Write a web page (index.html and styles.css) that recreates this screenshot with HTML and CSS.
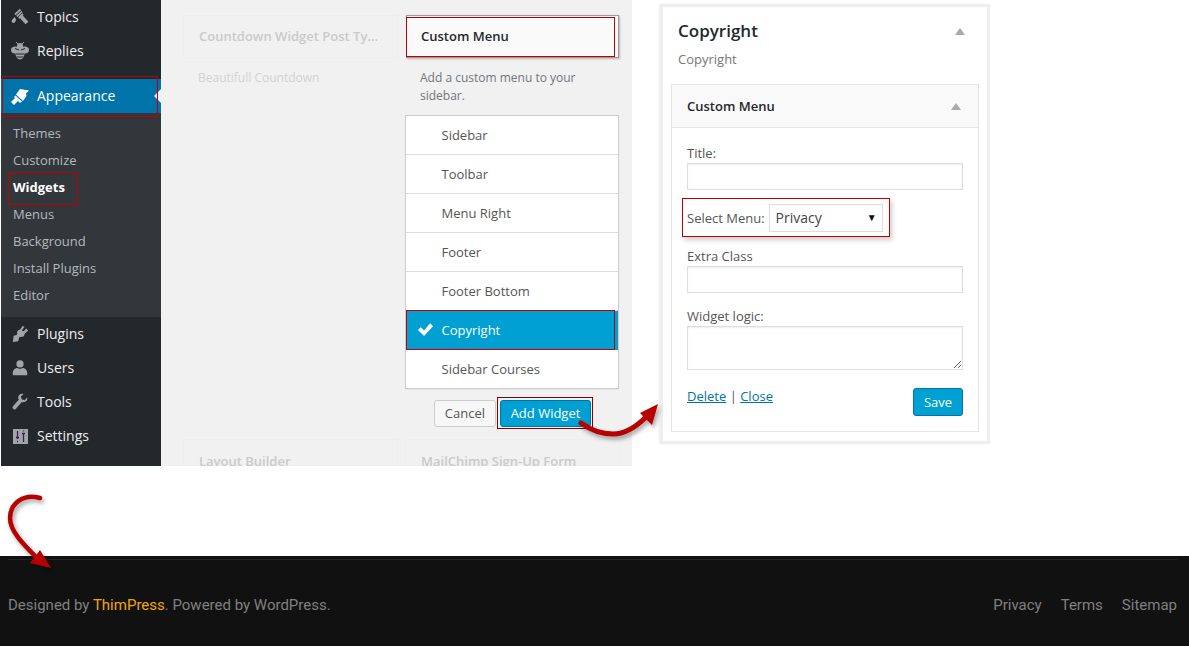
FILE: index.html
```html
<!DOCTYPE html>
<html lang="en">
<head>
<meta charset="utf-8">
<title>Custom Menu widget</title>
<link rel="stylesheet" href="styles.css">
</head>
<body>
<div class="shot">
  <nav class="side">
    <a class="mi"><svg class="ic" viewBox="0 0 18 18"><g class="ln"><path d="M4 6.500L9.500 1.500M5.800 8.300L11 3.700M7.700 10L12 6"/><path class="th" d="M10 8.500L16 15"/></g><path d="M3.500 9L5 11c0 2-1 4-2.500 4S0 13.500 1 12z"/></svg>Topics</a>
    <a class="mi"><svg class="ic" viewBox="0 0 18 18"><ellipse cx="4.500" cy="8" rx="4.500" ry="3.500"/><ellipse cx="13.500" cy="8" rx="4.500" ry="3.500"/><ellipse cx="9" cy="11.500" rx="4.500" ry="6"/><circle cx="9" cy="4" r="3"/><path class="gap" d="M4 6.500L8 8M14 6.500L10 8M5 12h8M5.500 15h7"/><path class="ant" d="M7 2L5 0M11 2l2-2"/></svg>Replies</a>
    <a class="mi cur"><svg class="ic" viewBox="0 0 18 18"><path d="M9 2L18 3.500L15 6.500L15.500 9L12 14L5 7.500z"/><path d="M4.500 8.500L11 14.500L9 16L7 14L3 18L0 15L4 11L3 10z"/></svg>Appearance<i class="notch"></i></a>
    <div class="sub">
      <a>Themes</a><a>Customize</a><a class="on">Widgets</a><a>Menus</a><a>Background</a><a>Install Plugins</a><a>Editor</a>
    </div>
    <a class="mi"><svg class="ic" viewBox="0 0 20 20"><path d="M13 1l2 1-3 4 2 1 3-3 2 2-4 4c0 3-3 4-5 3l-1 1-1 4-6 1 1-7 3-1 1-1c-1-2 0-4 3-5z"/></svg>Plugins</a>
    <a class="mi"><svg class="ic" viewBox="0 0 20 20"><circle cx="10" cy="5.500" r="4"/><path d="M2 18v-3c0-3 3-5 5-5 1 1 5 1 6 0 2 0 5 2 5 5v3z"/></svg>Users</a>
    <a class="mi"><svg class="ic" viewBox="0 0 20 20"><path d="M18 5l-3 3-3-1-1-3 3-3c-3-1-6 1-6 4 0 1 0 2 1 2l-7 8c-1 2 1 4 3 3l7-8c4 1 7-2 6-5z"/></svg>Tools</a>
    <a class="mi"><svg class="ic" viewBox="0 0 18 18"><rect x="2" y="2" width="15" height="15"/><path class="slid" d="M6.500 4v8M5 10.500h3M6 14.500h1M12.500 7v8M11 6.500h3M12.500 3.500v1"/></svg>Settings</a>
  </nav>
  <main class="avail">
    <div class="cols">
      <div class="col">
        <div class="ghost-title">Countdown Widget Post Ty...</div>
        <p class="ghost-desc">Beautifull Countdown</p>
      </div>
      <div class="col">
        <div class="wtitle">Custom Menu</div>
        <p class="desc">Add a custom menu to your sidebar.</p>
        <ul class="areas">
          <li>Sidebar</li><li>Toolbar</li><li>Menu Right</li><li>Footer</li><li>Footer Bottom</li>
          <li class="sel"><svg class="chk" viewBox="0 0 18 15"><path d="M1 8l3-3 3.500 3.500L14 1l3 3-9.500 10.500z"/></svg>Copyright</li>
          <li>Sidebar Courses</li>
        </ul>
        <div class="acts"><button class="btn">Cancel</button><button class="btn pri">Add Widget</button></div>
      </div>
    </div>
    <div class="cols lower">
      <div class="col"><div class="ghost-title">Layout Builder</div></div>
      <div class="col"><div class="ghost-title">MailChimp Sign-Up Form</div></div>
    </div>
  </main>
  <section class="panel">
    <header class="phead"><h2>Copyright</h2><i class="tri"></i></header>
    <p class="psub">Copyright</p>
    <div class="card">
      <div class="chead"><h3>Custom Menu</h3><i class="tri"></i></div>
      <form class="cbody">
        <label class="lab">Title:</label>
        <div class="inp"></div>
        <div class="selrow"><label>Select Menu:</label><div class="fsel"><span>Privacy</span><b>▼</b></div></div>
        <label class="lab">Extra Class</label>
        <div class="inp"></div>
        <label class="lab logic">Widget logic:</label>
        <div class="inp area"><svg class="grip" viewBox="0 0 9 9"><path d="M1 8l7-7M5 8l3-3" stroke="#666" fill="none"/></svg></div>
        <div class="foot"><span class="links"><a>Delete</a> | <a>Close</a></span><button class="btn pri save" type="button">Save</button></div>
      </form>
    </div>
  </section>

  <i class="mark m1"></i><i class="mark m2"></i><i class="mark m3"></i><i class="mark m4"></i><i class="mark m5"></i><i class="mark m6"></i>
  <svg class="arrow a1" viewBox="0 0 100 50"><path d="M11 28C22 36 33 39 43 39C56 39 66 32 76 22" fill="none" stroke="#b80000" stroke-width="5" stroke-linecap="round"/><path d="M88 9L70 18L82 30z" fill="#b80000"/></svg>
  <svg class="arrow a2" viewBox="0 0 60 90"><path d="M39 8C22 3 9 14 9 28C9 42 24 56 38 70" fill="none" stroke="#b80000" stroke-width="4.500" stroke-linecap="round"/><path d="M50 78L29 73L39 60z" fill="#b80000"/></svg>
</div>
<footer class="foot-bar">
  <div class="foot-in">
    <span>Designed by <a class="brand">ThimPress</a>. Powered by WordPress.</span>
    <nav class="foot-nav"><a>Privacy</a><a>Terms</a><a>Sitemap</a></nav>
  </div>
</footer>
</body>
</html>
```
FILE: styles.css
```css
*{box-sizing:border-box}
html,body{margin:0;padding:0;background:#fff}
body{width:1189px;height:649px;overflow:hidden;font-family:"Open Sans",sans-serif;font-size:13px;color:#444}
.shot{position:relative;display:flex;height:556px;padding-left:1px;align-items:flex-start}
.side{width:160px;height:466px;background:#23282d;color:#eee;font-size:14px;flex:none}
.mi{display:flex;align-items:center;height:34px;padding:0 0 2px 10px;position:relative}
.ic{width:18px;height:18px;fill:#a0a5aa;margin:0 8px -2px 0;flex:none}
.ln path{fill:none;stroke:#a0a5aa;stroke-width:1.800}
.ln .th{stroke-width:4}
.gap{fill:none;stroke:#23282d;stroke-width:1}
.ant{fill:none;stroke:#a0a5aa;stroke-width:1}
.slid{fill:none;stroke:#3d2350;stroke-width:1.300}
.mi:nth-child(3){margin-top:11px}
.cur{background:#0073aa;color:#fff}
.cur .ic{fill:#fff}
.notch{position:absolute;right:0;top:10px;border:7px solid transparent;border-left:0;border-right:7px solid #f1f1f1}
.sub{background:#32373c;padding:7px 0 0;height:204px;color:#b4b9be;font-size:13px}
.sub a{display:block;height:27px;line-height:27px;padding-left:12px}
.sub .on{color:#fff;font-weight:700}
.avail{width:471px;height:466px;background:#f1f1f1;flex:none;overflow:hidden;padding:15px 14px 0 22px}
.cols{display:flex;gap:8px}
.col{width:215px;flex:none}
.ghost-title{height:43px;line-height:41px;padding-left:15px;border:1px solid #eee;background:#f1f1f1;color:#cacaca;font-weight:600;font-size:13px}
.ghost-desc{margin:11px 0 0;padding-left:15px;color:#d2d2d2;line-height:18px;font-size:12px}
.wtitle{height:43px;line-height:40px;padding-left:14px;width:213px;background:#fafafa;border:1px solid #999;color:#23282d;font-weight:600;box-shadow:1px 1px 2px rgba(0,0,0,.25)}
.desc{margin:11px 0 0;padding:0 30px 0 14px;line-height:18px;color:#72777c;font-size:12px}
.areas{list-style:none;margin:10px 0 0 -1px;padding:0;background:#fff;border:1px solid #ccc;width:214px;box-shadow:0 1px 1px rgba(0,0,0,.04)}
.areas li{position:relative;height:39px;line-height:38px;padding-left:35.500px;border-bottom:1px solid #ddd;color:#555}
.areas li:last-child{border-bottom:0;height:38px}
.areas .sel{background:#00a0d2;color:#fff;border-bottom-color:#00a0d2}
.chk{position:absolute;left:11px;top:11px;width:17px;height:15px;fill:#fff}
.acts{display:flex;justify-content:flex-end;gap:4px;margin:11px 30px 0 0}
.btn{height:27px;padding:0 10px;font:13px/25px "Open Sans",sans-serif;background:#f7f7f7;border:1px solid #ccc;border-radius:3px;color:#555}
.pri{background:#00a0d2;border-color:#0073aa;color:#fff;width:91px;padding:0}
.lower{margin-top:12px}
.lower .ghost-title{line-height:43px}
.lower .col+.col .ghost-title{margin-left:-1px}
.panel{margin-left:28px;margin-top:4px;width:330px;height:440px;flex:none;background:#fff;border:3px solid #eee;padding:0 8px;box-shadow:-2px 0 2px #f4f4f4}
.phead{display:flex;justify-content:space-between;align-items:center;padding:9px 14px 0 7px}
.phead h2{margin:0;font-size:17px;line-height:30px;font-weight:600;color:#23282d}
.tri{display:block;border:5px solid transparent;border-top:0;border-bottom:7px solid #a9a9a9;width:0;height:0}
.psub{margin:3px 0 0 7px;line-height:20px;color:#777}
.card{margin-top:15px;width:308px;border:1px solid #e5e5e5;height:348px}
.chead{display:flex;justify-content:space-between;align-items:center;height:43px;padding:0 17px 0 15px;background:#f9f9f9;border-bottom:1px solid #e5e5e5}
.chead h3{margin:0;font-size:13px;font-weight:600;color:#23282d}
.cbody{padding:16px 15px 0}
.lab{display:block;line-height:18px;color:#555}
.inp{height:27px;margin-top:1px;border:1px solid #ddd;background:#fff;box-shadow:inset 0 1px 2px rgba(0,0,0,.07);position:relative}
.selrow{display:flex;align-items:center;gap:4px;margin-top:14px;height:28px;color:#555}
.selrow label{padding-bottom:1px}
.fsel{width:114px;height:28px;border:1px solid #ddd;padding:0 0 2px 6px;display:flex;justify-content:space-between;align-items:center;font-size:14px;color:#444}
.fsel b{font-size:10px;font-weight:400;color:#111;margin-right:5px}
.selrow+.lab{margin-top:15px}
.logic{margin-top:14px}
.area{height:44px}
.grip{position:absolute;right:0;bottom:0;width:9px;height:9px}
.foot{display:flex;justify-content:space-between;align-items:flex-start;margin-top:18px}
.links{line-height:16px;color:#555}
.links a{color:#0073aa;text-decoration:underline}
.save{width:50px;height:28px}
.mark{position:absolute;border:1px solid #c00000;display:block;pointer-events:none}
.m1{left:2px;top:76px;width:156px;height:41px}
.m2{left:8px;top:172px;width:70px;height:33px}
.m3{left:406px;top:17px;width:209px;height:40px}
.m4{left:406px;top:310px;width:209px;height:40px}
.m5{left:497px;top:397px;width:96px;height:32px;border-color:#800}
.m6{left:682px;top:198px;width:208px;height:39px;box-shadow:2px 3px 5px rgba(0,0,0,.2)}
.arrow{position:absolute;overflow:visible;filter:drop-shadow(2px 3px 2px rgba(0,0,0,.35))}
.a1{left:570px;top:395px;width:100px;height:50px}
.a2{left:1px;top:490px;width:60px;height:90px}
.foot-bar{height:90px;background:#111;padding:3px 12px 0 8px;color:#808080;font:15px Roboto,sans-serif}
.foot-in{border-top:1px solid #222;display:flex;justify-content:space-between;align-items:center;height:87px;padding-top:4px}
.brand{color:#eea800}
.foot-nav{display:flex;gap:19px}
```
